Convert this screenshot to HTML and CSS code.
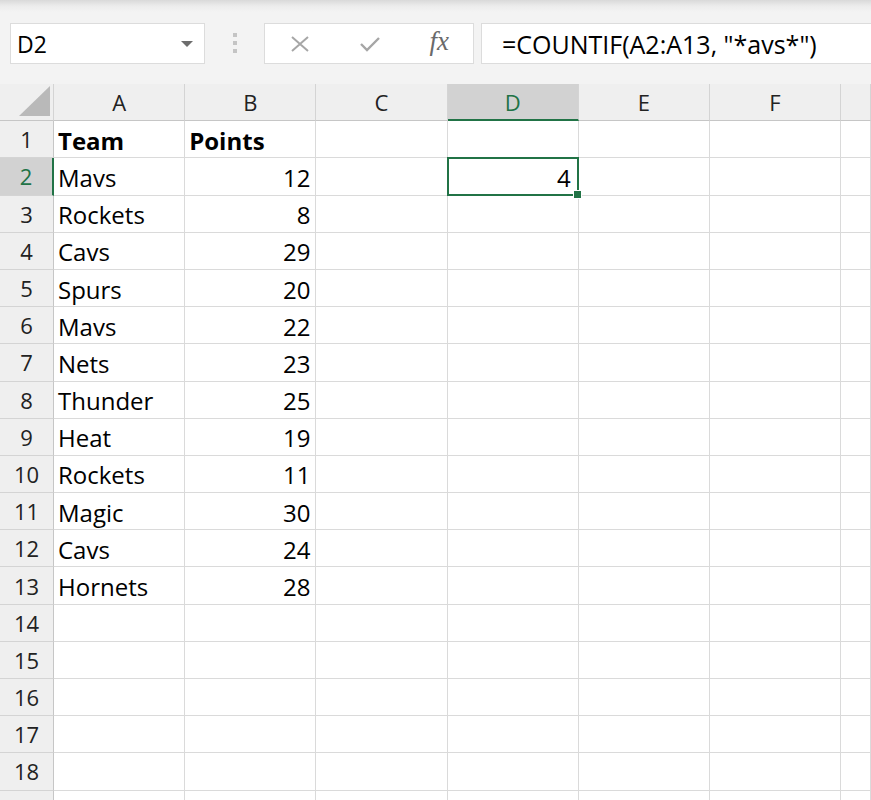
FILE: index.html
```html
<!DOCTYPE html>
<html lang="en">
<head>
    <meta charset="UTF-8">
    <title>Book1 - Excel</title>
    <link rel="stylesheet" href="styles.css">
</head>
<body>

<div class="toolbar">
    <div class="name-box">
        <span>D2</span>
        <svg class="caret" width="12" height="6" viewBox="0 0 12 6"><path d="M0 0 L12 0 L6 6 Z" fill="#6d6d6d"/></svg>
    </div>
    <div class="grip">
        <i></i><i></i><i></i>
    </div>
    <div class="fx-buttons">
        <svg width="20" height="16" viewBox="0 0 20 16"><path d="M2 1 L18 15 M18 1 L2 15" stroke="#a6a6a6" stroke-width="2"/></svg>
        <svg width="22" height="16" viewBox="0 0 22 16"><path d="M2 8 L8 14 L20 2" stroke="#a6a6a6" stroke-width="2.4" fill="none"/></svg>
        <span class="fx">fx</span>
    </div>
    <div class="formula">=COUNTIF(A2:A13, "*avs*")</div>
</div>

<div class="sheet" id="sheet"></div>

<script>
    var cols = ["A", "B", "C", "D", "E", "F", ""];
    var data = [
        ["Team", "Points"],
        ["Mavs", 12], ["Rockets", 8], ["Cavs", 29], ["Spurs", 20],
        ["Mavs", 22], ["Nets", 23], ["Thunder", 25], ["Heat", 19],
        ["Rockets", 11], ["Magic", 30], ["Cavs", 24], ["Hornets", 28]
    ];
    var sheet = document.getElementById("sheet");

    function cell(cls, text) {
        var el = document.createElement("div");
        el.className = cls;
        if (text !== undefined) el.textContent = text;
        sheet.appendChild(el);
        return el;
    }

    // column headers
    var corner = cell("corner");
    corner.innerHTML = '<svg width="31" height="30" viewBox="0 0 31 30"><path d="M31 0 L31 30 L0 30 Z" fill="#b9b9b9"/></svg>';
    cols.forEach(function (c) {
        cell("col-head" + (c === "D" ? " active" : ""), c);
    });

    // rows
    for (var r = 1; r <= 19; r++) {
        cell("row-head" + (r === 2 ? " active" : ""), r);
        var row = data[r - 1] || [];
        cols.forEach(function (c, i) {
            var cls = "cell";
            var text = "";
            if (i === 0 && row[0] !== undefined) text = row[0];
            if (i === 1 && row[1] !== undefined) {
                text = row[1];
                if (r > 1) cls += " num";
            }
            if (r === 1) cls += " bold";
            if (c === "D" && r === 2) {
                cls += " num selected";
                text = 4;
            }
            cell(cls, text);
        });
    }
</script>

</body>
</html>
```

FILE: styles.css
```css
body {
    margin: 0;
    padding: 0;
    background-color: #ffffff;
    font-family: "Open Sans", "Noto Sans", sans-serif;
    color: #000000;
    overflow: hidden;
}
.toolbar {
    height: 84px;
    box-sizing: border-box;
    padding: 23px 0 0 10px;
    display: flex;
    align-items: flex-start;
    background: linear-gradient(#d9d9d9 0px, #ececec 6px, #f3f3f3 12px);
}
.name-box,
.fx-buttons,
.formula {
    height: 41px;
    box-sizing: border-box;
    background-color: #ffffff;
    border: 1px solid #dcdcdc;
    display: flex;
    align-items: center;
}
.name-box {
    width: 195px;
    padding: 0 11px 0 6px;
    justify-content: space-between;
    font-size: 23px;
}
.grip {
    width: 59px;
    display: flex;
    flex-direction: column;
    align-items: center;
    gap: 4px;
    padding-top: 10px;
}
.grip i {
    display: block;
    width: 4px;
    height: 4px;
    background-color: #c4c4c4;
}
.fx-buttons {
    width: 210px;
    padding: 0 24px 0 25px;
    justify-content: space-between;
}
.fx {
    font-family: "Liberation Serif", serif;
    font-style: italic;
    font-size: 27px;
    color: #6a6a6a;
    margin-top: -4px;
}
.formula {
    flex: 1;
    margin-left: 7px;
    padding-left: 20px;
    border-right: none;
    font-size: 25px;
    white-space: nowrap;
}
.sheet {
    display: grid;
    grid-template-columns: 54px repeat(6, 131.2px) 1fr;
    grid-auto-rows: 37.2px;
}
.corner,
.col-head,
.row-head {
    background-color: #efefef;
    box-sizing: border-box;
    display: flex;
    align-items: center;
    justify-content: center;
    font-size: 22px;
    color: #222222;
}
.corner {
    border-right: 1px solid #d4d4d4;
    border-bottom: 1px solid #c6c6c6;
    align-items: flex-end;
    justify-content: flex-end;
    padding: 0 3px 4px 0;
}
.col-head {
    border-right: 1px solid #d4d4d4;
    border-bottom: 1px solid #c6c6c6;
}
.col-head.active {
    background-color: #d2d2d2;
    color: #217346;
    border-bottom: 2px solid #217346;
}
.row-head {
    border-right: 1px solid #c6c6c6;
    border-bottom: 1px solid #d4d4d4;
}
.row-head.active {
    background-color: #d2d2d2;
    color: #217346;
    border-right: 2px solid #217346;
}
.cell {
    box-sizing: border-box;
    border-right: 1px solid #dadada;
    border-bottom: 1px solid #dadada;
    padding: 2px 5px 0 4px;
    display: flex;
    align-items: center;
    font-size: 24px;
    white-space: nowrap;
}
.cell.bold {
    font-weight: bold;
}
.cell.num {
    justify-content: flex-end;
}
.cell.selected {
    position: relative;
    border: 2px solid #217346;
    margin: -1px 0 0 -1px;
    padding-right: 6px;
}
.cell.selected::after {
    content: "";
    position: absolute;
    right: -5px;
    bottom: -5px;
    width: 7px;
    height: 7px;
    background-color: #217346;
    border: 1px solid #ffffff;
}
```
